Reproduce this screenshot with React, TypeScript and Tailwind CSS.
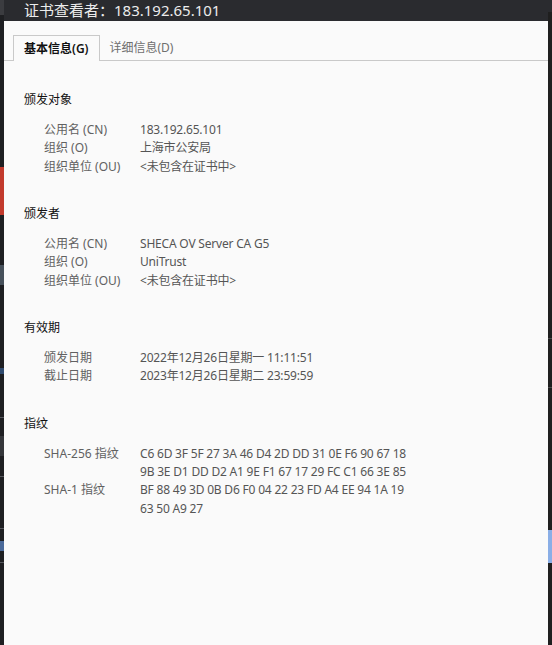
const ui = '"Noto Sans", "Noto Sans CJK SC", sans-serif';

type Row = { label: string; lines: string[] };
type Section = { title: string; rows: Row[] };

const sections: Section[] = [
  {
    title: "颁发对象",
    rows: [
      { label: "公用名 (CN)", lines: ["183.192.65.101"] },
      { label: "组织 (O)", lines: ["上海市公安局"] },
      { label: "组织单位 (OU)", lines: ["<未包含在证书中>"] },
    ],
  },
  {
    title: "颁发者",
    rows: [
      { label: "公用名 (CN)", lines: ["SHECA OV Server CA G5"] },
      { label: "组织 (O)", lines: ["UniTrust"] },
      { label: "组织单位 (OU)", lines: ["<未包含在证书中>"] },
    ],
  },
  {
    title: "有效期",
    rows: [
      { label: "颁发日期", lines: ["2022年12月26日星期一 11:11:51"] },
      { label: "截止日期", lines: ["2023年12月26日星期二 23:59:59"] },
    ],
  },
  {
    title: "指纹",
    rows: [
      {
        label: "SHA-256 指纹",
        lines: [
          "C6 6D 3F 5F 27 3A 46 D4 2D DD 31 0E F6 90 67 18",
          "9B 3E D1 DD D2 A1 9E F1 67 17 29 FC C1 66 3E 85",
        ],
      },
      {
        label: "SHA-1 指纹",
        lines: ["BF 88 49 3D 0B D6 F0 04 22 23 FD A4 EE 94 1A 19", "63 50 A9 27"],
      },
    ],
  },
];

// strip of the desktop showing behind the window on the left edge
function LeftEdge() {
  return (
    <div className="flex w-[4px] shrink-0 flex-col bg-[#1e1f22]">
      <div className="h-[15px] bg-[#3b3c40]" />
      <div className="h-[152px]" />
      <div className="h-[48px] bg-[#c23a2c]" />
      <div className="h-[50px]" />
      <div className="h-[20px] bg-[#46505a]" />
      <div className="h-[83px]" />
      <div className="h-[6px] bg-[#2f4a6e]" />
      <div className="h-[43px]" />
      <div className="h-px bg-[#55575c]" />
      <div className="h-[18px]" />
      <div className="h-[20px] bg-[#34363a]" />
      <div className="h-[20px]" />
      <div className="h-px bg-[#55575c]" />
      <div className="h-[51px]" />
      <div className="h-px bg-[#55575c]" />
      <div className="h-[12px]" />
      <div className="h-[10px] bg-[#4a6a9a]" />
      <div className="h-[11px]" />
      <div className="h-px bg-[#55575c]" />
    </div>
  );
}

function RightEdge() {
  return (
    <div className="flex w-[4px] shrink-0 flex-col bg-[#1f1f1f]">
      <div className="h-[12px] bg-[#2a2b2f]" />
      <div className="h-[326px]" />
      <div className="h-px bg-[#4a4a4a]" />
      <div className="h-[48px]" />
      <div className="h-px bg-[#4a4a4a]" />
      <div className="h-[142px]" />
      <div className="h-[33px] bg-[#8aaee6]" />
    </div>
  );
}

export default function App() {
  return (
    <div
      className="flex h-[645px] w-[552px] overflow-hidden bg-[#1f1f1f] text-[12px]"
      style={{ fontFamily: ui }}
    >
      <LeftEdge />

      <div className="flex min-w-0 flex-1 flex-col">
        <div className="h-[21px] shrink-0 bg-[#2a2b2f] pl-[20px] text-[15px] leading-[21px] text-[#ececec]">
          证书查看者：183.192.65.101
        </div>

        <div className="flex flex-1 flex-col bg-[#fafafa]">
          <div className="flex h-[40px] items-end border-b border-[#c9c9c9] pl-[9px]">
            <div className="relative -mb-px flex h-[26px] items-center border border-b-0 border-[#c9c9c9] bg-[#fafafa] px-[10px] font-semibold text-[#111]">
              基本信息(G)
            </div>
            <div className="flex h-[25px] items-center px-[10px] text-[#6f6f6f]">详细信息(D)</div>
          </div>

          <div className="pl-[20px] pt-[30px]">
            {sections.map((s) => (
              <section key={s.title} className="mb-[29px]">
                <h2 className="mb-[12px] h-[18px] leading-[18px] text-[#111]">{s.title}</h2>
                {s.rows.map((r) => (
                  <div key={r.label} className="flex pl-[20px]">
                    <div className="w-[96px] shrink-0 leading-[18.33px] text-[#616161]">{r.label}</div>
                    <div className="tracking-[-0.2px] text-[#555]">
                      {r.lines.map((l) => (
                        <div key={l} className="leading-[18.33px]">
                          {l}
                        </div>
                      ))}
                    </div>
                  </div>
                ))}
              </section>
            ))}
          </div>
        </div>
      </div>

      <RightEdge />
    </div>
  );
}
